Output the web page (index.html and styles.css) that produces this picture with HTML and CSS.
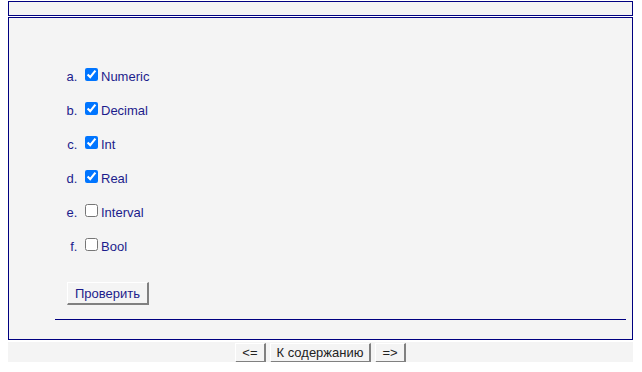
FILE: index.html
```html
<!DOCTYPE html>
<html>
<head>
<meta charset="utf-8">
<link rel="stylesheet" href="styles.css">
</head>
<body>
<div class="page">
  <div class="topbar"></div>
  <div class="main">
    <ol class="answers">
      <li><label><input type="checkbox" checked>Numeric</label></li>
      <li><label><input type="checkbox" checked>Decimal</label></li>
      <li><label><input type="checkbox" checked>Int</label></li>
      <li><label><input type="checkbox" checked>Real</label></li>
      <li><label><input type="checkbox">Interval</label></li>
      <li><label><input type="checkbox">Bool</label></li>
    </ol>
    <div class="check-row"><button class="btn check">Проверить</button></div>
    <div class="rule"></div>
  </div>
  <div class="nav">
    <button class="btn navbtn">&lt;=</button>
    <button class="btn navbtn">К содержанию</button>
    <button class="btn navbtn">=&gt;</button>
  </div>
</div>
</body>
</html>
```
FILE: styles.css
```css
html, body {
  margin: 0;
  padding: 0;
  background: #ffffff;
}
body {
  font-family: "Liberation Sans", Arial, sans-serif;
  font-size: 13px;
}
.page {
  width: 625px;
  margin: 1px 0 0 8px;
}
.topbar {
  height: 13px;
  background: #f4f4f4;
  border: 1px solid #000080;
}
.main {
  margin-top: 1px;
  background: #f4f4f4;
  border: 1px solid #000080;
  height: 323px;
  box-sizing: border-box;
  padding-top: 50px;
  color: #1c1c8c;
}
.answers {
  list-style: lower-alpha;
  margin: 0;
  padding-left: 72px;
}
.answers li {
  height: 34px;
  line-height: 15px;
}
.answers input {
  margin: 0 3px 0 4px;
  width: 13px;
  height: 13px;
  vertical-align: 0;
}
.check-row {
  padding-left: 58px;
  margin-top: 10px;
}
.btn {
  font-family: "Liberation Sans", Arial, sans-serif;
  font-size: 13px;
  background: #f4f4f4;
  border: 1px solid;
  border-color: #ffffff #808080 #808080 #ffffff;
  border-width: 1px 2px 2px 1px;
  padding: 0;
  height: 23px;
  display: block;
}
.check {
  color: #1c1c8c;
  width: 82px;
}
.rule {
  margin: 14px 6px 0 46px;
  height: 1px;
  background: #000080;
}
.nav {
  margin-top: 2px;
  height: 20px;
  background: #f4f4f4;
  display: flex;
  justify-content: center;
  gap: 4px;
  padding-top: 1px;
  box-sizing: border-box;
  overflow: visible;
}
.navbtn {
  color: #222222;
  height: 20px;
  padding: 0 6px;
  flex: none;
}
```
